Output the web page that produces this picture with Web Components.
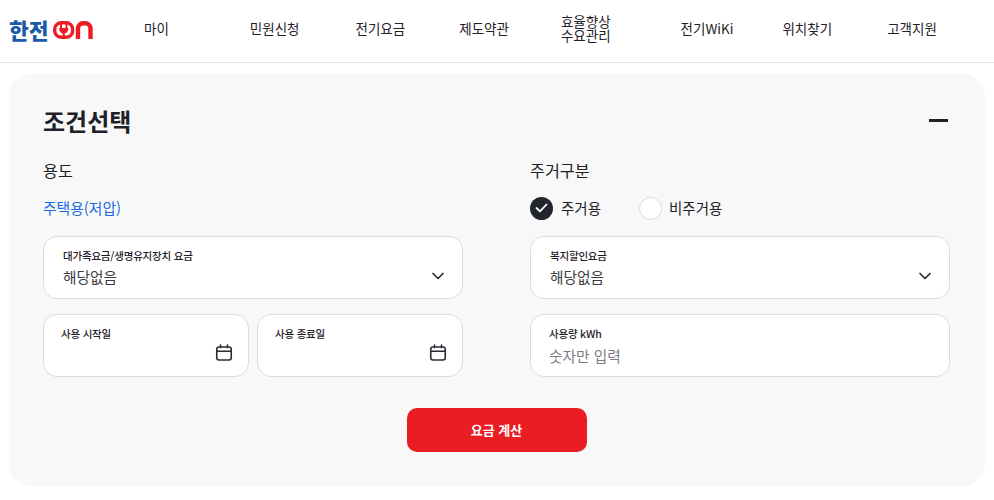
<!DOCTYPE html>
<html lang="ko">
<head>
<meta charset="utf-8">
<title>요금 계산</title>
<style>
  html, body { margin: 0; background: #fff; }
  body { font-family: "Noto Sans CJK KR", "Noto Sans", sans-serif; color: #1f2128; overflow: hidden; }
</style>
</head>
<body>
<kep-header>
  <kep-logo></kep-logo>
  <kep-nav-item style="--gap:81px">마이</kep-nav-item>
  <kep-nav-item style="--gap:56px">민원신청</kep-nav-item>
  <kep-nav-item style="--gap:54px">전기요금</kep-nav-item>
  <kep-nav-item style="--gap:52px">제도약관</kep-nav-item>
  <kep-nav-item style="--gap:70px">효율향상<br>수요관리</kep-nav-item>
  <kep-nav-item style="--gap:49px">전기WiKi</kep-nav-item>
  <kep-nav-item style="--gap:55px">위치찾기</kep-nav-item>
  <kep-nav-item>고객지원</kep-nav-item>
</kep-header>

<kep-panel heading="조건선택">
  <kep-group heading="용도">
    <kep-usage>주택용(저압)</kep-usage>
    <kep-field label="대가족요금/생명유지장치 요금" icon="chevron">해당없음</kep-field>
    <kep-date-pair>
      <kep-field label="사용 시작일" icon="calendar" inset="17"></kep-field>
      <kep-field label="사용 종료일" icon="calendar" inset="17"></kep-field>
    </kep-date-pair>
  </kep-group>
  <kep-group heading="주거구분">
    <kep-radios>
      <kep-radio checked>주거용</kep-radio>
      <kep-radio>비주거용</kep-radio>
    </kep-radios>
    <kep-field label="복지할인요금" icon="chevron">해당없음</kep-field>
    <kep-field label="사용량 kWh" placeholder inset="18">숫자만 입력</kep-field>
  </kep-group>
  <kep-button slot="action">요금 계산</kep-button>
</kep-panel>

<script>
const CHEVRON = `<svg width="14" height="14" viewBox="0 0 14 14" fill="none"><path d="M2 4.5 7 9.5 12 4.5" stroke="#2b2d33" stroke-width="1.7" stroke-linecap="round" stroke-linejoin="round"/></svg>`;
const CALENDAR = `<svg width="18" height="18" viewBox="0 0 18 18" fill="none" stroke="#2b2d33" stroke-width="1.6"><rect x="1.75" y="3" width="14.5" height="13" rx="2.2"/><path d="M1.75 7.2H16.25M5.5 1V3.6M12.5 1V3.6" stroke-linecap="round"/></svg>`;

class KepHeader extends HTMLElement {
  constructor() {
    super();
    this.attachShadow({ mode: 'open' }).innerHTML = `
    <style>
      :host { display: flex; align-items: center; height: 56px; padding: 0 0 6px 10px; border-bottom: 1px solid #e0e0ea; }
    </style>
    <slot></slot>`;
  }
}

class KepLogo extends HTMLElement {
  constructor() {
    super();
    this.attachShadow({ mode: 'open' }).innerHTML = `
    <style>
      :host { display: flex; align-items: center; width: 134px; height: 20px; margin-top: 3px; }
      .han { font: 900 21.5px/20px "Noto Sans CJK KR", sans-serif; color: #1b5aa8; margin-left: -1px; width: 44px; white-space: nowrap; }
      svg { display: block; }
    </style>
    <span class="han">한전</span>
    <svg width="40" height="18" viewBox="0 0 40 18" fill="none">
      <rect x="1.7" y="1.7" width="18" height="14.6" rx="6.6" stroke="#ed1c24" stroke-width="3.4"/>
      <path d="M8 3V7M13.5 3V7" stroke="#ed1c24" stroke-width="2"/>
      <path d="M6.3 7H15.2V8.2A4.45 4.45 0 0 1 6.3 8.2Z" fill="#ed1c24"/>
      <path d="M10.75 12V15" stroke="#ed1c24" stroke-width="2"/>
      <path d="M25 18V7.5A5.3 5.3 0 0 1 30.3 2.2H32.2A5.3 5.3 0 0 1 37.5 7.5V18" stroke="#ed1c24" stroke-width="4.4"/>
    </svg>`;
  }
}

class KepNavItem extends HTMLElement {
  constructor() {
    super();
    this.attachShadow({ mode: 'open' }).innerHTML = `
    <style>
      :host { display: block; margin-right: var(--gap, 0); font: 400 13.5px/14px "Noto Sans CJK KR", sans-serif; color: #1f2128; white-space: nowrap; }
    </style>
    <slot></slot>`;
  }
}

class KepPanel extends HTMLElement {
  constructor() {
    super();
    this.attachShadow({ mode: 'open' }).innerHTML = `
    <style>
      :host { display: block; margin: 11px 9px 0; height: 412px; box-sizing: border-box; padding: 29px 35px 0 34px; background: #f8f8f9; border-radius: 22px; }
      .top { display: flex; align-items: center; justify-content: space-between; height: 36px; margin-bottom: 17px; }
      h2 { margin: 0; font: 700 24px/36px "Noto Sans CJK KR", sans-serif; color: #1f2128; }
      .minus { width: 19px; height: 3px; background: #1f2128; margin: -2px 2px 0 0; }
      .cols { display: grid; grid-template-columns: 420px 420px; column-gap: 67px; }
      .action { display: flex; justify-content: center; margin-top: 31px; }
    </style>
    <div class="top"><h2>${this.getAttribute('heading')}</h2><div class="minus"></div></div>
    <div class="cols"><slot></slot></div>
    <div class="action"><slot name="action"></slot></div>`;
  }
}

class KepGroup extends HTMLElement {
  constructor() {
    super();
    this.attachShadow({ mode: 'open' }).innerHTML = `
    <style>
      :host { display: flex; flex-direction: column; gap: 15px; }
      h3 { margin: 0 0 -13px; height: 28px; font: 400 16.2px/28px "Noto Sans CJK KR", sans-serif; color: #1f2128; }
    </style>
    <h3>${this.getAttribute('heading')}</h3>
    <slot></slot>`;
  }
}

class KepUsage extends HTMLElement {
  constructor() {
    super();
    this.attachShadow({ mode: 'open' }).innerHTML = `
    <style>
      :host { display: flex; align-items: center; height: 44px; margin-bottom: -9px; font: 400 14.8px/24px "Noto Sans CJK KR", sans-serif; color: #1a6be0; }
    </style>
    <slot></slot>`;
  }
}

class KepRadios extends HTMLElement {
  constructor() {
    super();
    this.attachShadow({ mode: 'open' }).innerHTML = `
    <style>
      :host { display: flex; align-items: center; gap: 38px; height: 44px; margin-bottom: -9px; }
    </style>
    <slot></slot>`;
  }
}

class KepRadio extends HTMLElement {
  constructor() {
    super();
    const on = this.hasAttribute('checked');
    this.attachShadow({ mode: 'open' }).innerHTML = `
    <style>
      :host { display: flex; align-items: center; gap: ${on ? 8 : 7}px; font: 400 14.5px/24px "Noto Sans CJK KR", sans-serif; color: #1f2128; }
      .dot { width: 23px; height: 23px; box-sizing: border-box; border-radius: 50%; display: flex; align-items: center; justify-content: center; background: #fff; border: 1.5px solid #d6dbe4; }
      .dot.on { background: #22252d; border: 0; }
    </style>
    <span class="dot ${on ? 'on' : ''}">${on ? '<svg width="13" height="10" viewBox="0 0 13 10" fill="none"><path d="M1.5 5 5 8.3 11.5 1.5" stroke="#fff" stroke-width="1.8" stroke-linecap="round" stroke-linejoin="round"/></svg>' : ''}</span>
    <slot></slot>`;
  }
}

class KepDatePair extends HTMLElement {
  constructor() {
    super();
    this.attachShadow({ mode: 'open' }).innerHTML = `
    <style>
      :host { display: grid; grid-template-columns: 206px 206px; column-gap: 8px; }
    </style>
    <slot></slot>`;
  }
}

class KepField extends HTMLElement {
  constructor() {
    super();
    const icon = this.getAttribute('icon');
    const inset = this.getAttribute('inset') || '19';
    const svg = icon === 'chevron' ? CHEVRON : icon === 'calendar' ? CALENDAR : '';
    const ph = this.hasAttribute('placeholder');
    this.attachShadow({ mode: 'open' }).innerHTML = `
    <style>
      :host { display: block; position: relative; box-sizing: border-box; height: 63px; padding: 11px 16px 0 ${inset}px; background: #fff; border: 1px solid #d9dce6; border-radius: 14px; }
      .label { font: 500 10.5px/16px "Noto Sans CJK KR", sans-serif; letter-spacing: -0.2px; color: #1f2128; white-space: nowrap; }
      .value { margin-top: ${ph ? 2 : 1}px; font: 400 14.7px/24px "Noto Sans CJK KR", sans-serif; color: ${ph ? '#7b7e86' : '#3a3c44'}; min-height: 24px; }
      .icon { position: absolute; right: ${icon === 'chevron' ? 17 : 15}px; top: ${icon === 'chevron' ? 39 : 38}px; transform: translateY(-50%); display: flex; }
    </style>
    <div class="label">${this.getAttribute('label')}</div>
    <div class="value"><slot></slot></div>
    ${svg ? `<span class="icon">${svg}</span>` : ''}`;
  }
}

class KepButton extends HTMLElement {
  constructor() {
    super();
    this.attachShadow({ mode: 'open' }).innerHTML = `
    <style>
      :host { display: flex; align-items: center; justify-content: center; width: 180px; height: 44px; background: #ea1d24; border-radius: 10px; color: #fff; font: 700 13px/20px "Noto Sans CJK KR", sans-serif; }
    </style>
    <slot></slot>`;
  }
}

customElements.define('kep-header', KepHeader);
customElements.define('kep-logo', KepLogo);
customElements.define('kep-nav-item', KepNavItem);
customElements.define('kep-panel', KepPanel);
customElements.define('kep-group', KepGroup);
customElements.define('kep-usage', KepUsage);
customElements.define('kep-radios', KepRadios);
customElements.define('kep-radio', KepRadio);
customElements.define('kep-date-pair', KepDatePair);
customElements.define('kep-field', KepField);
customElements.define('kep-button', KepButton);
</script>
</body>
</html>
